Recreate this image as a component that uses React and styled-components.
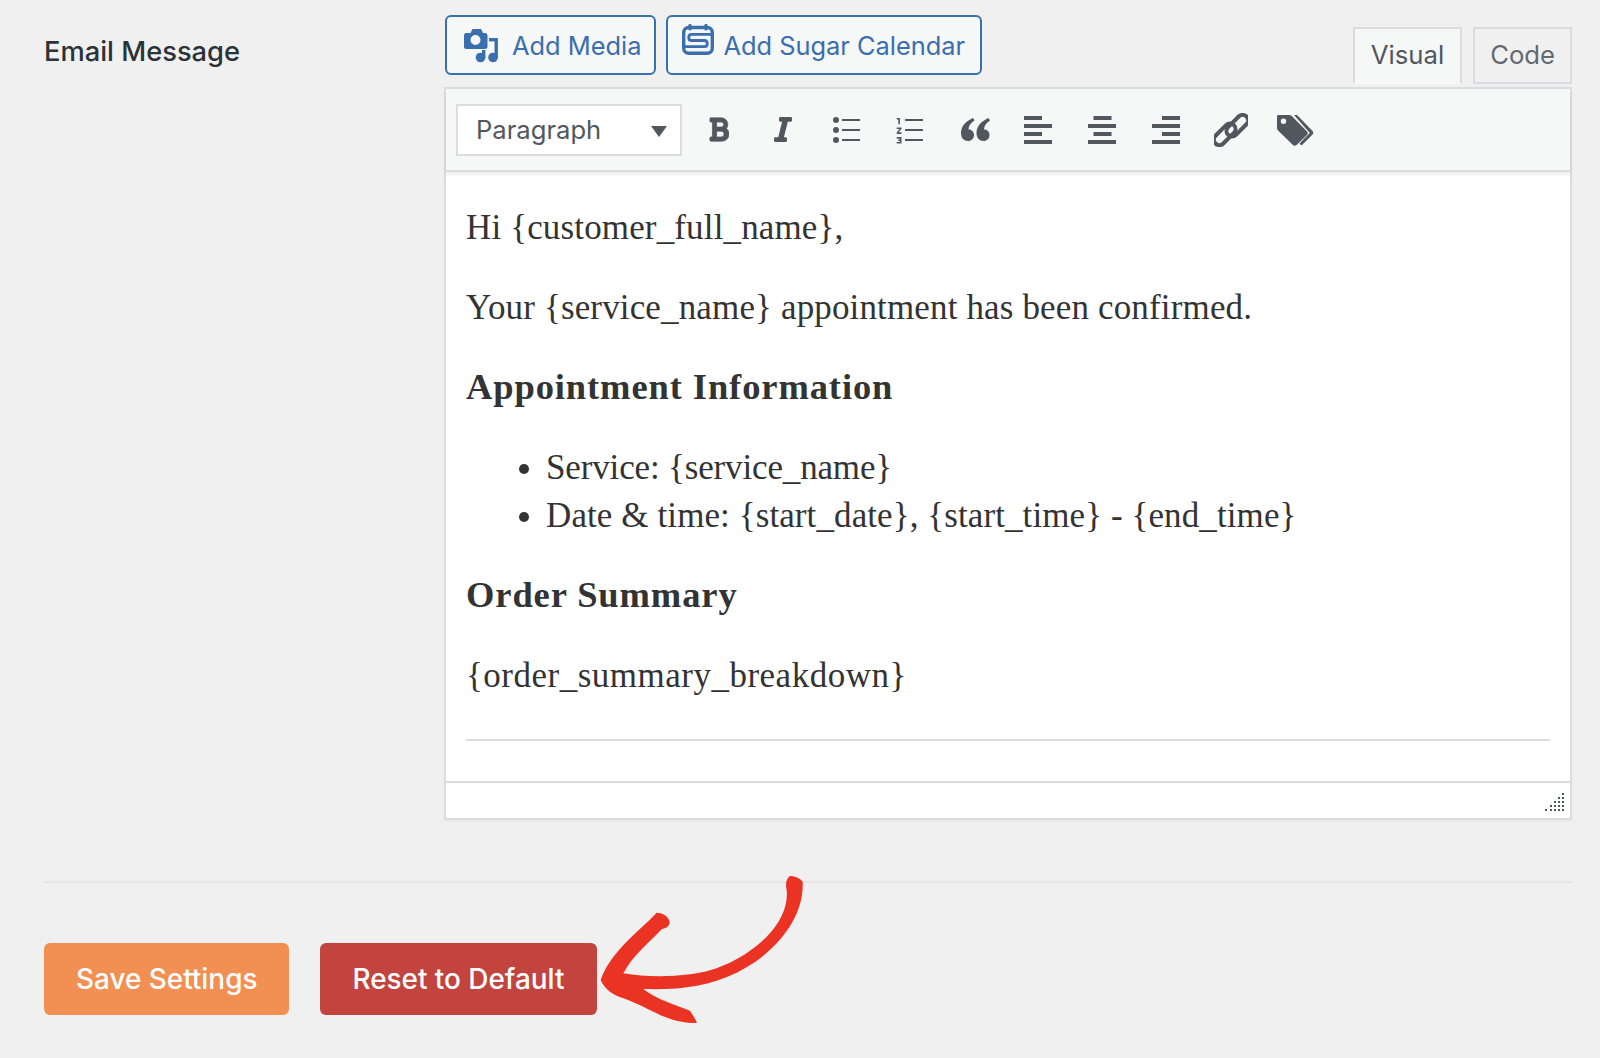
import styled, { createGlobalStyle } from 'styled-components'
import { FaBold, FaItalic } from 'react-icons/fa'

const GlobalStyle = createGlobalStyle`
html, body {
    margin: 0;
    padding: 0;
    background: #f0f0f1;
}
body {
    font-family: Inter, Roboto, sans-serif;
    color: #3c434a;
}
`

const BulletIcon = () => (
    <ToolSvg viewBox="0 0 30 30">
        <circle cx="4" cy="5" r="3" />
        <circle cx="4" cy="15" r="3" />
        <circle cx="4" cy="25" r="3" />
        <rect x="10" y="4" width="18" height="2" />
        <rect x="10" y="14" width="18" height="2" />
        <rect x="10" y="24" width="18" height="2" />
    </ToolSvg>
)

// digits are the ones from the material format_list_numbered icon
const NumberIcon = () => (
    <ToolSvg viewBox="0 0 30 30">
        <path
            transform="translate(-2.500 -3.500) scale(1.600)"
            d="M2 17h2v.5H3v1h1v.5H2v1h3v-4H2zm1-9h1V4H2v1h1v3zm-1 3h1.800L2 13.100v.9h3v-1H3.200L5 10.900V10H2v1z"
        />
        <rect x="9" y="4" width="18" height="2" />
        <rect x="9" y="14" width="18" height="2" />
        <rect x="9" y="24" width="18" height="2" />
    </ToolSvg>
)

const QuoteIcon = () => (
    <ToolSvg viewBox="0 0 30 30">
        <path d="M13 3 C6 6 1 11 1 18 C1 23 4 26 8 26 C11.500 26 14 23.500 14 20 C14 16.500 11.500 14.500 8.500 14.500 C8.500 11 10.500 8 14.500 5.500 Z" />
        <path d="M28.500 3 C21.500 6 16.500 11 16.500 18 C16.500 23 19.500 26 23.500 26 C27 26 29.500 23.500 29.500 20 C29.500 16.500 27 14.500 24 14.500 C24 11 26 8 30 5.500 Z" />
    </ToolSvg>
)

const AlignIcon = ({ align }) => {
    const shortX = align === 'left' ? 0 : align === 'center' ? 5.500 : 10
    return (
        <ToolSvg viewBox="0 0 30 30">
            <rect x={shortX} y="1" width="18" height="4" />
            <rect x="0" y="9" width="28" height="4" />
            <rect x={shortX} y="17" width="18" height="4" />
            <rect x="0" y="25" width="28" height="4" />
        </ToolSvg>
    )
}

const LinkIcon = () => (
    <ToolSvg $w={34} $h={34} viewBox="0 0 34 34">
        <g fill="none" stroke="#50575e" strokeWidth="4">
            <rect x="10.300" y="7.200" width="26" height="11" rx="5.500" transform="rotate(-45 23.300 12.700)" />
            <rect x="-2.300" y="15.800" width="26" height="11" rx="5.500" transform="rotate(-45 10.700 21.300)" />
        </g>
    </ToolSvg>
)

const TagsIcon = () => (
    <ToolSvg $w={38} $h={34} viewBox="0 0 38 34">
        <path d="M1 3.500 C1 2.500 1.500 2 2.500 2 L13 2 C14 2 15 2.300 15.800 3 L31 18.500 C32 19.500 32 21 31 22 L20.500 32 C19.500 33 18 33 17 32 L2 17.500 C1.300 16.800 1 16 1 15 Z M7.500 5.500 A2.700 2.700 0 1 0 7.500 10.900 A2.700 2.700 0 1 0 7.500 5.500 Z" fillRule="evenodd" />
        <path d="M18 2 L21 2 L36.500 18 C37.500 19 37.500 20.500 36.500 21.500 L25.500 32.500 L23.500 30.500 L33.800 20 Z" />
    </ToolSvg>
)

const MediaIcon = () => (
    <svg width="36" height="36" viewBox="0 0 36 36" fill="#3a6ead">
        <path d="M2 6 L6.500 6 L8.500 2 L17 2 L19 6 L21 6 C22.500 6 23.500 7 23.500 8.500 L23.500 20 C23.500 21 22.500 22 21 22 L2 22 C1 22 0 21 0 20 L0 8 C0 7 1 6 2 6 Z M11.500 8 A5 5 0 1 0 11.500 18 A5 5 0 1 0 11.500 8 Z" fillRule="evenodd" />
        <circle cx="16.500" cy="30.500" r="4.800" />
        <rect x="18" y="23" width="3.400" height="8" />
        <circle cx="29" cy="30.500" r="4.800" />
        <rect x="30.500" y="11" width="3.400" height="20" />
        <rect x="25" y="11" width="8" height="3.400" />
    </svg>
)

const SugarIcon = () => (
    <svg width="32" height="31" viewBox="0 0 32 31" fill="none" stroke="#3a6ead">
        <rect x="1.700" y="3.500" width="28.600" height="25.800" rx="5" strokeWidth="3.400" />
        <path d="M8 1.500 L8 5 M24 1.500 L24 5" strokeWidth="3.200" strokeLinecap="round" />
        <path d="M30 10.300 L9.500 10.300 C5.800 10.300 5.800 16.500 9.500 16.500 L22.500 16.500 C26.200 16.500 26.200 22.700 22.500 22.700 L2 22.700" strokeWidth="2.800" />
    </svg>
)

const ArrowMark = () => (
    <Arrow viewBox="0 0 780 570">
        <path
            fill="#eb3323"
            d="M690 108 C705 108 720 115 728 125 C730 175 715 240 650 310 C580 385 480 430 380 442 C340 448 290 448 250 447 C290 478 345 495 390 512 C398 525 405 535 411 548 C370 552 330 537 300 525 C265 508 235 492 190 475 C160 465 135 450 122 420 C135 380 165 340 205 300 C235 270 265 245 290 218 C310 218 330 232 329 250 C325 262 315 265 305 268 C265 310 220 345 190 400 C250 410 320 412 390 403 C480 392 560 350 620 290 C660 250 685 200 680 150 C675 130 680 115 690 108 Z"
        />
    </Arrow>
)

export default function App() {
    return (
        <>
            <GlobalStyle />
            <Page>
                <FieldRow>
                    <Label>Email Message</Label>
                    <EditorColumn>
                        <EditorTopBar>
                            <MediaButtons>
                                <MediaButton><MediaIcon />Add Media</MediaButton>
                                <MediaButton $sugar><SugarIcon />Add Sugar Calendar</MediaButton>
                            </MediaButtons>
                            <Tabs>
                                <Tab $active>Visual</Tab>
                                <Tab>Code</Tab>
                            </Tabs>
                        </EditorTopBar>
                        <Editor>
                            <Toolbar>
                                <FormatSelect>
                                    Paragraph
                                    <Caret />
                                </FormatSelect>
                                <Tools>
                                    <Tool><BoldGlyph /></Tool>
                                    <Tool><ItalicGlyph /></Tool>
                                    <Tool><BulletIcon /></Tool>
                                    <Tool><NumberIcon /></Tool>
                                    <Tool><QuoteIcon /></Tool>
                                    <Tool><AlignIcon align="left" /></Tool>
                                    <Tool><AlignIcon align="center" /></Tool>
                                    <Tool><AlignIcon align="right" /></Tool>
                                    <Tool><LinkIcon /></Tool>
                                    <Tool><TagsIcon /></Tool>
                                </Tools>
                            </Toolbar>
                            <Content>
                                <p>Hi {'{customer_full_name}'},</p>
                                <p>Your {'{service_name}'} appointment has been confirmed.</p>
                                <p><strong>Appointment Information</strong></p>
                                <ul>
                                    <ListLine $track={-0.150}>Service: {'{service_name}'}</ListLine>
                                    <ListLine $track={0.100}>Date &amp; time: {'{start_date}'}, {'{start_time}'} - {'{end_time}'}</ListLine>
                                </ul>
                                <p><strong>Order Summary</strong></p>
                                <TokenLine>{'{order_summary_breakdown}'}</TokenLine>
                                <Rule />
                            </Content>
                            <StatusBar>
                                <Grip viewBox="0 0 19 19">
                                    <path d="M17 0h2v2h-2zM13 4h2v2h-2zM17 4h2v2h-2zM9 8h2v2H9zM13 8h2v2h-2zM17 8h2v2h-2zM5 12h2v2H5zM9 12h2v2H9zM13 12h2v2h-2zM17 12h2v2h-2zM0 16h2v2H0zM5 16h2v2H5zM9 16h2v2H9zM13 16h2v2h-2zM17 16h2v2h-2z" />
                                </Grip>
                            </StatusBar>
                        </Editor>
                    </EditorColumn>
                </FieldRow>
                <Divider />
                <Actions>
                    <ActionButton $bg="#f28f53">Save Settings</ActionButton>
                    <ActionButton $bg="#c3443f">Reset to Default</ActionButton>
                </Actions>
                <ArrowMark />
            </Page>
        </>
    )
}

const Page = styled.div`
position: relative;
width: 1600px;
height: 1058px;
overflow: hidden;
padding: 15px 28px 0 44px;
box-sizing: border-box;
`

const FieldRow = styled.div`
display: grid;
grid-template-columns: 400px 1128px;
`

const Label = styled.div`
font-size: 27.300px;
line-height: 40px;
font-weight: 500;
color: #2c3338;
padding-top: 17px;
`

const EditorColumn = styled.div`
display: flex;
flex-direction: column;
`

const EditorTopBar = styled.div`
display: flex;
justify-content: space-between;
height: 72px;
`

const MediaButtons = styled.div`
display: flex;
gap: 10px;
margin-left: 1px;
`

const MediaButton = styled.div`
display: flex;
align-items: center;
gap: ${(props) => (props.$sugar ? '9px' : '12px')};
height: 60px;
box-sizing: border-box;
padding: ${(props) => (props.$sugar ? '0 15px 0 14px' : '0 13px 0 17px')};
background: #f6f7f7;
border: 2px solid #3a6ead;
border-radius: 6px;
color: #3a6ead;
font-size: 25.400px;
svg {
    flex: none;
    margin-top: ${(props) => (props.$sugar ? '-11px' : '0')};
}
`

const Tabs = styled.div`
display: flex;
gap: 11px;
align-items: flex-end;
height: 69px;
`

const Tab = styled.div`
display: flex;
align-items: center;
justify-content: center;
box-sizing: border-box;
height: 57px;
padding: ${(props) => (props.$active ? '0 16px 3px' : '0 15px 3px')};
font-size: 25.700px;
color: ${(props) => (props.$active ? '#50575e' : '#646970')};
background: ${(props) => (props.$active ? '#f6f7f7' : '#f0f0f1')};
border: 2px solid #dcdcde;
border-bottom: ${(props) => (props.$active ? '2px solid #f6f7f7' : '2px solid #dcdcde')};
`

const Editor = styled.div`
border: 2px solid #dcdcde;
background: #fff;
box-shadow: 0 1px 2px rgba(0, 0, 0, 0.04);
`

const Toolbar = styled.div`
display: flex;
align-items: center;
height: 81px;
padding: 0 0 0 10px;
background: #f6f7f7;
border-bottom: 2px solid #dcdcde;
box-shadow: 0 3px 3px rgba(0, 0, 0, 0.07);
`

const FormatSelect = styled.div`
display: flex;
align-items: center;
justify-content: space-between;
box-sizing: border-box;
width: 226px;
height: 52px;
padding: 0 13px 0 18px;
background: #fff;
border: 2px solid #dcdcde;
font-size: 25.600px;
color: #50575e;
`

const Caret = styled.span`
width: 0;
height: 0;
margin-top: 3px;
border-left: 8px solid transparent;
border-right: 8px solid transparent;
border-top: 11px solid #50575e;
`

const Tools = styled.div`
display: flex;
margin-left: 5px;
`

const Tool = styled.div`
display: flex;
align-items: center;
justify-content: center;
width: 64px;
height: 40px;
color: #50575e;
`

const ToolSvg = styled.svg`
flex: none;
width: ${(props) => props.$w || 30}px;
height: ${(props) => props.$h || 30}px;
fill: #50575e;
`

const BoldGlyph = styled(FaBold)`
width: 20px;
height: 27px;
stroke: currentColor;
stroke-width: 14px;
`

const ItalicGlyph = styled(FaItalic)`
width: 22px;
height: 27px;
stroke: currentColor;
stroke-width: 24px;
`

const Content = styled.div`
padding: 32px 20px 0 20px;
height: 609px;
box-sizing: border-box;
font-family: "Liberation Serif", serif;
font-size: 35px;
letter-spacing: 0.150px;
line-height: 48px;
color: #333;

p {
    margin: 0 0 32px;
}

strong {
    font-size: 36.500px;
    line-height: 1;
    letter-spacing: 0.900px;
}

ul {
    margin: 0 0 32px;
    padding-left: 80px;
}
`

const ListLine = styled.li`
letter-spacing: ${(props) => props.$track}px;
`

const TokenLine = styled.p`
letter-spacing: 0.500px;
`

const Rule = styled.div`
height: 2px;
background: #dcdcde;
margin-top: 39px;
`

const StatusBar = styled.div`
display: flex;
justify-content: flex-end;
align-items: flex-end;
height: 37px;
padding: 0 6px 6px 0;
box-sizing: border-box;
border-top: 2px solid #dcdcde;
`

const Grip = styled.svg`
width: 19px;
height: 19px;
fill: #50575e;
`

const Divider = styled.div`
height: 2px;
background: #e6e6e7;
margin-top: 61px;
`

const Actions = styled.div`
display: flex;
gap: 31px;
margin-top: 60px;
`

const ActionButton = styled.div`
display: flex;
align-items: center;
height: 72px;
padding: 0 32px;
border-radius: 6px;
background: ${(props) => props.$bg};
color: #fff;
font-size: 27.900px;
font-weight: 500;
`

const Arrow = styled.svg`
position: absolute;
left: 560px;
top: 840px;
width: 260px;
height: 190px;
`
